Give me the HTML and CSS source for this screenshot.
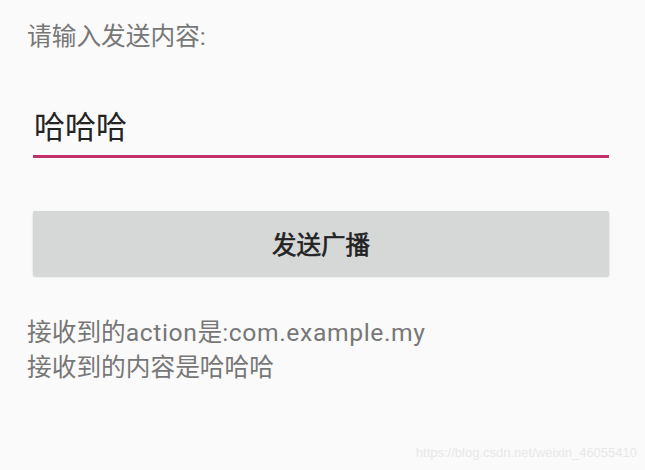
FILE: index.html
```html
<!DOCTYPE html>
<html lang="zh-CN">
<head>
<meta charset="utf-8">
<title>广播</title>
<link rel="stylesheet" href="styles.css">
</head>
<body>
<div class="page">
  <div class="label">请输入发送内容:</div>
  <div class="field"><span class="field-text">哈哈哈</span></div>
  <div class="button">发送广播</div>
  <div class="result">
    <div class="line">接收到的<span class="latin">action</span>是<span class="latin">:com.example.my</span></div>
    <div class="line">接收到的内容是哈哈哈</div>
  </div>
</div>
<div class="watermark">https://blog.csdn.net/weixin_46055410</div>
</body>
</html>
```

FILE: styles.css
```css
html, body {
  margin: 0;
  padding: 0;
  background: #fafafa;
  width: 645px;
  height: 470px;
  overflow: hidden;
}
body {
  position: relative;
  font-family: Roboto, "Noto Sans CJK SC", sans-serif;
}
.page {
  display: flex;
  flex-direction: column;
  padding: 20px 36px 0 27px;
}
.label {
  font-size: 24.7px;
  line-height: 34px;
  color: #777777;
}
.field {
  margin: 54px 0 0 6px;
  height: 40px;
  padding: 0 0 7px 1px;
  border-bottom: 3px solid #c3306a;
  font-size: 31px;
  line-height: 40px;
  color: #242424;
}
.button {
  margin: 53px 0 0 6px;
  height: 65px;
  background: #d6d7d7;
  border-radius: 2px;
  box-shadow: 0 1px 2px rgba(0, 0, 0, 0.18), 0 0 1px rgba(0, 0, 0, 0.08);
  display: flex;
  align-items: center;
  justify-content: center;
  font-size: 24.5px;
  font-weight: 400;
  -webkit-text-stroke: 0.6px #222;
  color: #222;
}
.result {
  margin-top: 39px;
  display: flex;
  flex-direction: column;
}
.line {
  font-size: 24.7px;
  line-height: 35px;
  color: #777777;
}
.latin {
  letter-spacing: 0.6px;
}
.watermark {
  position: absolute;
  right: 8px;
  top: 444px;
  font-family: "Liberation Sans", Arial, sans-serif;
  font-size: 13px;
  line-height: 18px;
  color: #e8e8e8;
}
```
